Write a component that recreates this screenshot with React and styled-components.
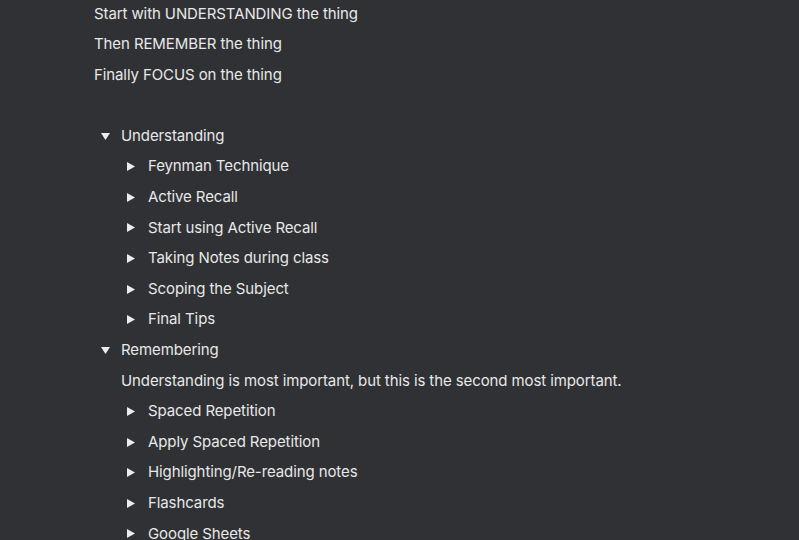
import React from 'react';
import styled, {createGlobalStyle} from "styled-components";

const GlobalStyle = createGlobalStyle`
  html, body {
    margin: 0;
    padding: 0;
    background: #2f3134;
  }
  body {
    font-family: Inter, "Noto Sans", sans-serif;
    color: #e8e8e8;
    overflow: hidden;
  }
`

const tree = [
    {
        title: "Understanding",
        open: true,
        children: [
            {title: "Feynman Technique"},
            {title: "Active Recall"},
            {title: "Start using Active Recall"},
            {title: "Taking Notes during class"},
            {title: "Scoping the Subject"},
            {title: "Final Tips"},
        ]
    },
    {
        title: "Remembering",
        open: true,
        text: "Understanding is most important, but this is the second most important.",
        children: [
            {title: "Spaced Repetition"},
            {title: "Apply Spaced Repetition"},
            {title: "Highlighting/Re-reading notes"},
            {title: "Flashcards"},
            {title: "Google Sheets"},
        ]
    },
];

function Triangle({open}) {
    return (
        <Arrow open={open}>
            {open ? (
                <svg width="9" height="7" viewBox="0 0 9 7">
                    <path d="M0 0 L9 0 L4.5 7 Z" fill="#ececec"/>
                </svg>
            ) : (
                <svg width="8" height="9" viewBox="0 0 8 9">
                    <path d="M0 0 L8 4.5 L0 9 Z" fill="#ececec"/>
                </svg>
            )}
        </Arrow>
    );
}

function Toggle({item}) {
    return (
        <div>
            <Row>
                <Triangle open={item.open}/>
                <Line>{item.title}</Line>
            </Row>
            {item.open && (
                <Children>
                    {item.text && <Line>{item.text}</Line>}
                    {item.children.map((c) => <Toggle key={c.title} item={c}/>)}
                </Children>
            )}
        </div>
    );
}

function App() {
    return (
        <Page>
            <GlobalStyle/>
            <Line>Start with UNDERSTANDING the thing</Line>
            <Line>Then REMEMBER the thing</Line>
            <Line>Finally FOCUS on the thing</Line>
            <Line>&nbsp;</Line>
            {tree.map((t) => <Toggle key={t.title} item={t}/>)}
        </Page>
    );
}

export default App;

const Page = styled.div`
  padding: 0 0 0 94px;
  margin-top: -1.5px;
`

const Line = styled.div`
  font-size: 15px;
  letter-spacing: -0.1px;
  line-height: 24.6px;
  padding: 3px 0;
  white-space: nowrap;
`

const Row = styled.div`
  display: flex;
  align-items: flex-start;
`

const Arrow = styled.div`
  width: 27px;
  height: 30.6px;
  flex-shrink: 0;
  box-sizing: border-box;
  padding-left: ${props => props.open ? '7px' : '6px'};
  display: flex;
  align-items: center;
  svg {
    display: block;
  }
`

const Children = styled.div`
  padding-left: 27px;
`
